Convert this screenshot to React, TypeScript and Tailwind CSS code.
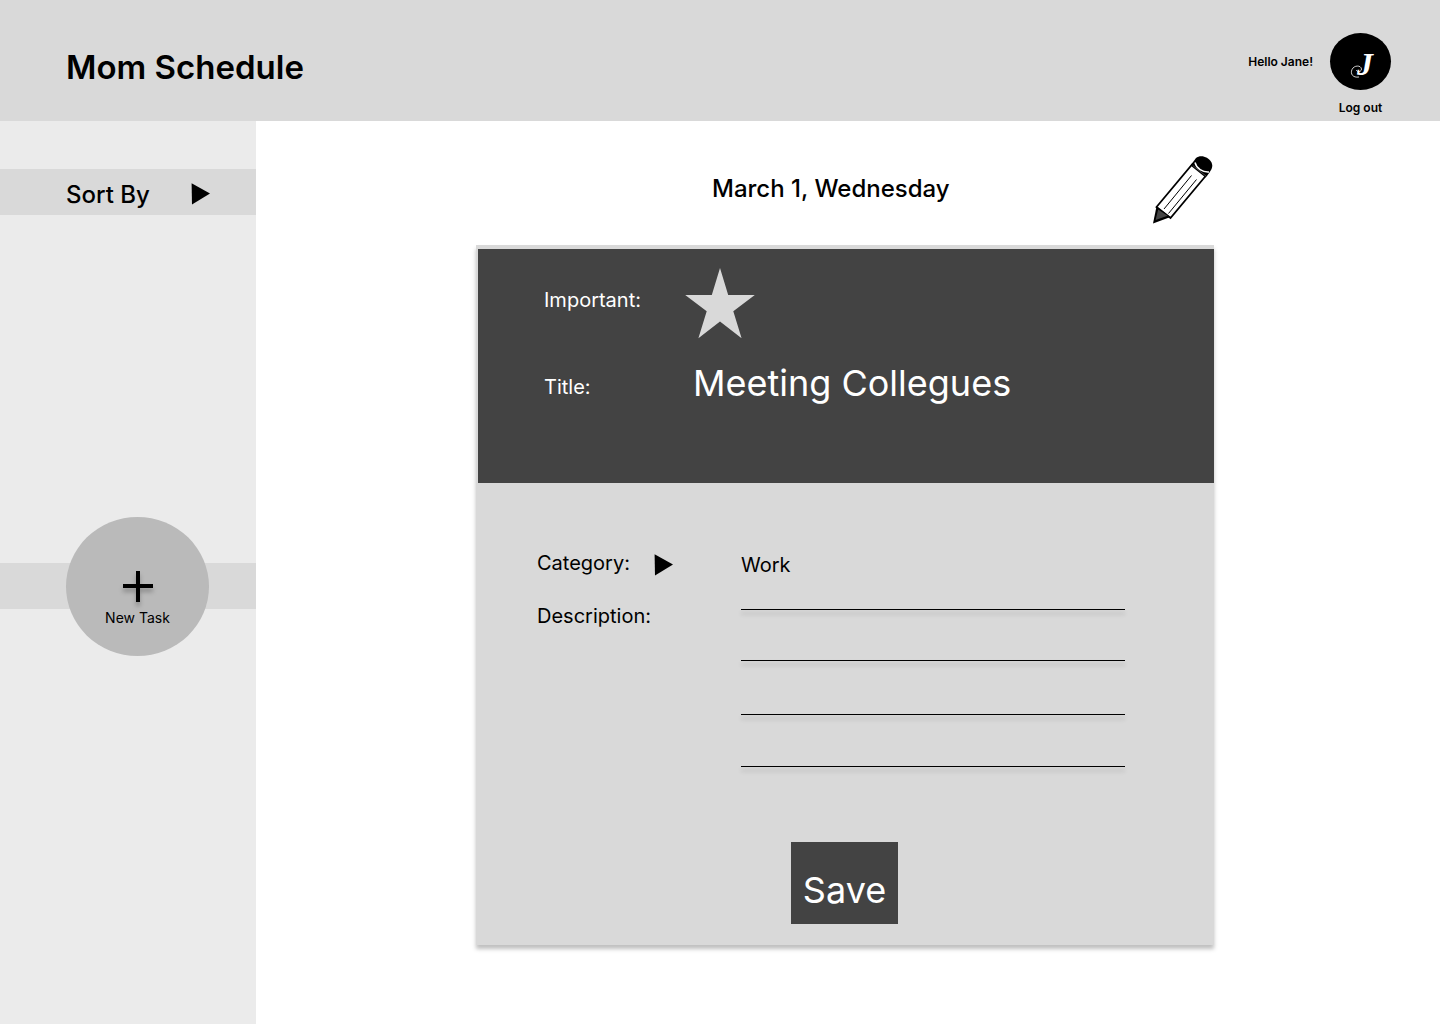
import React from "react";

function PlayArrow({ className }: { className?: string }) {
  return (
    <svg width="20" height="22" viewBox="0 0 20 22" className={className} aria-hidden="true">
      <path d="M0.6 0.2 19 10.6 1 21.4Z" fill="#000" />
    </svg>
  );
}

function Star() {
  return (
    <svg width="70" height="71" viewBox="0 0 70 71" aria-hidden="true">
      <path
        d="M35 0 43.2 27H69.8L48.3 43.3 56.6 70.2 35 53.6 13.4 70.2 21.7 43.3 0.2 27H26.8Z"
        fill="#d9d9d9"
      />
    </svg>
  );
}

function Pencil() {
  return (
    <svg width="62" height="70" viewBox="0 0 62 70" aria-hidden="true">
      <path d="M4.5 52 40.5 9 54.5 20 18.5 63Z" fill="#fff" stroke="#000" strokeWidth="1.8" />
      <path d="M12 54 39.5 20.5M16.500 58.500 44.500 24.500" stroke="#000" strokeWidth="1" />
      <path d="M4.500 51.500 1 68.500 18.500 62Z" fill="#000" />
      <path d="M6.200 54.500 3.600 65 15.500 60.800Z" fill="#444" />
      <path
        d="M38.500 10.500 44 3C48 -0.500 56 1 59.500 7.500C61.500 12 59.500 15.500 53.500 22.500Z"
        fill="#000"
      />
      <path d="M43 7.500C44.500 13.500 50.500 17.500 57 17" stroke="#fff" strokeWidth="1.500" fill="none" />
      <path d="M40.800 10.600 54 21" stroke="#777" strokeWidth="0.600" />
    </svg>
  );
}

function Avatar() {
  return (
    <div className="relative h-[57px] w-[61px] rounded-[50%] bg-black text-white">
      <span className="absolute top-[15px] left-[27px] font-['Liberation_Serif',serif] text-[32px] leading-[32px] italic">
        J
      </span>
      <svg className="absolute inset-0" width="61" height="57" viewBox="0 0 61 57" fill="none" aria-hidden="true">
        <path
          d="M29 44C23 45 20 41 22 36.500C24 32 31 32 31.500 36C31.500 39 27 40 26.500 37"
          stroke="#fff"
          strokeWidth="0.800"
        />
      </svg>
    </div>
  );
}

function Header() {
  return (
    <header className="flex h-[121px] items-start justify-between bg-[#d9d9d9] pl-[66px]">
      <h1 className="mt-[47px] text-[33px] leading-[41px] font-semibold">Mom Schedule</h1>
      <div className="mr-[49px] flex items-start text-xs font-semibold">
        <span className="mt-[54px] mr-[17px] leading-4">Hello Jane!</span>
        <div className="mt-[33px] flex flex-col items-center">
          <Avatar />
          <span className="mt-[10px] leading-4">Log out</span>
        </div>
      </div>
    </header>
  );
}

function Sidebar() {
  return (
    <aside className="w-64 bg-[#ebebeb] pt-12">
      <div className="flex h-[46px] items-center bg-[#d9d9d9] pl-[66px]">
        <span className="w-[125px] pt-[5px] text-2xl leading-7 font-medium">Sort By</span>
        <PlayArrow className="mt-1" />
      </div>
      <div className="mt-[348px] flex h-[46px] items-center bg-[#d9d9d9] pl-[66px]">
        <button className="flex h-[139px] w-[143px] shrink-0 flex-col items-center rounded-[50%] bg-[#bababa] pt-[54px]">
          <svg
            width="30"
            height="31"
            viewBox="0 0 30 31"
            className="drop-shadow-[0_4px_2px_rgba(0,0,0,0.25)]"
            aria-hidden="true"
          >
            <path d="M0 15H30M15 0V31" stroke="#000" strokeWidth="4" />
          </svg>
          <span className="mt-2 text-sm leading-4">New Task</span>
        </button>
      </div>
    </aside>
  );
}

function Rule({ className }: { className: string }) {
  return <div className={`h-px w-[384px] bg-black shadow-[0_4px_4px_rgba(0,0,0,0.25)] ${className}`} />;
}

function TaskCard() {
  return (
    <section className="ml-[220px] h-[700px] w-[738px] bg-[#d9d9d9] pt-1 pl-0.5 shadow-[0_4px_4px_rgba(0,0,0,0.25)]">
      <div className="h-[234px] bg-[#434343] pl-[66px] text-white">
        <div className="flex items-start pt-[19px]">
          <span className="mt-5 w-[141px] text-xl leading-6">Important:</span>
          <Star />
        </div>
        <div className="mt-[21px] flex items-center">
          <span className="w-[149px] pt-2 text-xl leading-6">Title:</span>
          <span className="text-4xl leading-[46px]">Meeting Collegues</span>
        </div>
      </div>
      <div className="flex pl-[59px] text-xl leading-6">
        <div className="w-[204px] pt-[68px]">
          <div className="flex items-start">
            <span className="w-[117px]">Category:</span>
            <PlayArrow className="mt-[3px]" />
          </div>
          <p className="mt-[28px]">Description:</p>
        </div>
        <div className="pt-[70px]">
          <p>Work</p>
          <Rule className="mt-8" />
          <Rule className="mt-[50px]" />
          <Rule className="mt-[53px]" />
          <Rule className="mt-[51px]" />
        </div>
      </div>
      <button className="mt-[75px] ml-[313px] flex h-[82px] w-[107px] justify-center bg-[#434343] pt-[26px] text-4xl leading-[44px] text-white">
        Save
      </button>
    </section>
  );
}

export default function App() {
  return (
    <div className="flex h-[1024px] w-[1440px] flex-col overflow-hidden bg-white font-['Inter',sans-serif] text-black">
      <Header />
      <div className="flex flex-1">
        <Sidebar />
        <main className="flex-1">
          <div className="flex h-[124px] items-start pl-[456px]">
            <h2 className="mt-[53px] w-[440px] text-2xl leading-[29px] font-medium">March 1, Wednesday</h2>
            <div className="mt-[34px]">
              <Pencil />
            </div>
          </div>
          <TaskCard />
        </main>
      </div>
    </div>
  );
}
